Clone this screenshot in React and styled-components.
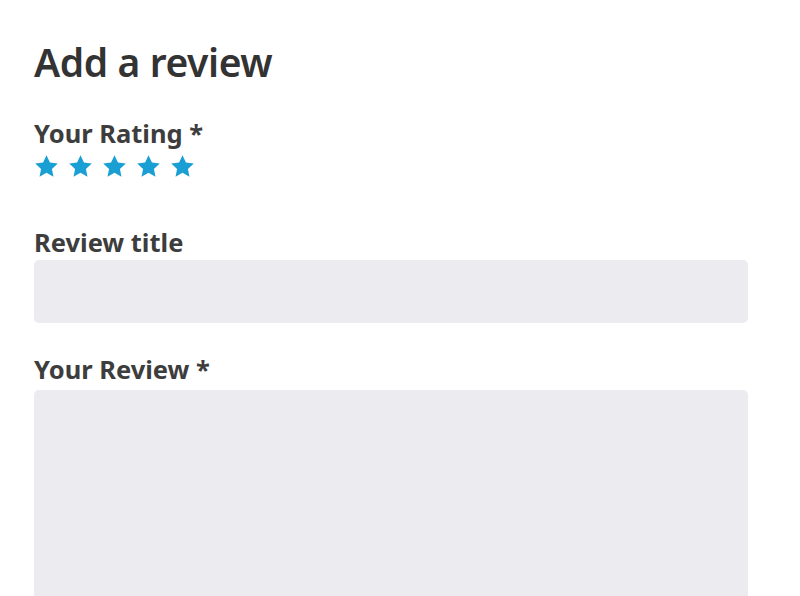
import React from 'react';
import styled, { createGlobalStyle } from 'styled-components';

const Global = createGlobalStyle`
  html, body { margin: 0; padding: 0; background: #fff; }
  body { font-family: "Noto Sans", "Open Sans", sans-serif; color: #333; }
`;

const Page = styled.div`
  padding: 38px 52px 0 34px;
  height: 596px;
  box-sizing: border-box;
  overflow: hidden;
`;

const Title = styled.h2`
  margin: 0 0 32px;
  font-size: 39px;
  font-weight: 600;
  line-height: 48px;
  color: #333;
  letter-spacing: -0.4px;
`;

const Label = styled.label`
  display: block;
  font-size: 25.5px;
  font-weight: 700;
  line-height: 30px;
  color: #3d3d3d;
  margin-bottom: ${(p) => p.gap || 6}px;
`;

const Stars = styled.div`
  display: flex;
  gap: 9px;
  margin-bottom: 48px;
  svg { display: block; }
`;

const Field = styled.input`
  display: block;
  width: 100%;
  box-sizing: border-box;
  height: 63px;
  border: none;
  border-radius: 5px;
  background: #ececf0;
  margin-bottom: 31px;
  outline: none;
`;

const Area = styled.textarea`
  display: block;
  width: 100%;
  box-sizing: border-box;
  height: 260px;
  border: none;
  border-radius: 5px;
  background: #ececf0;
  resize: none;
  outline: none;
`;

const Star = () => (
  <svg width="25" height="25" viewBox="0 0 24 24">
    <path
      fill="#1a9fd5"
      d="M12 1.2l3.3 7 7.5.9-5.6 5.2 1.5 7.5L12 18l-6.7 3.8 1.5-7.5L1.2 9.1l7.5-.9z"
    />
  </svg>
);

export default function App() {
  return (
    <Page>
      <Global />
      <Title>Add a review</Title>
      <Label gap={6}>Your Rating *</Label>
      <Stars>
        {[0, 1, 2, 3, 4].map((i) => (
          <Star key={i} />
        ))}
      </Stars>
      <Label gap={3}>Review title</Label>
      <Field type="text" />
      <Label gap={6}>Your Review *</Label>
      <Area />
    </Page>
  );
}
